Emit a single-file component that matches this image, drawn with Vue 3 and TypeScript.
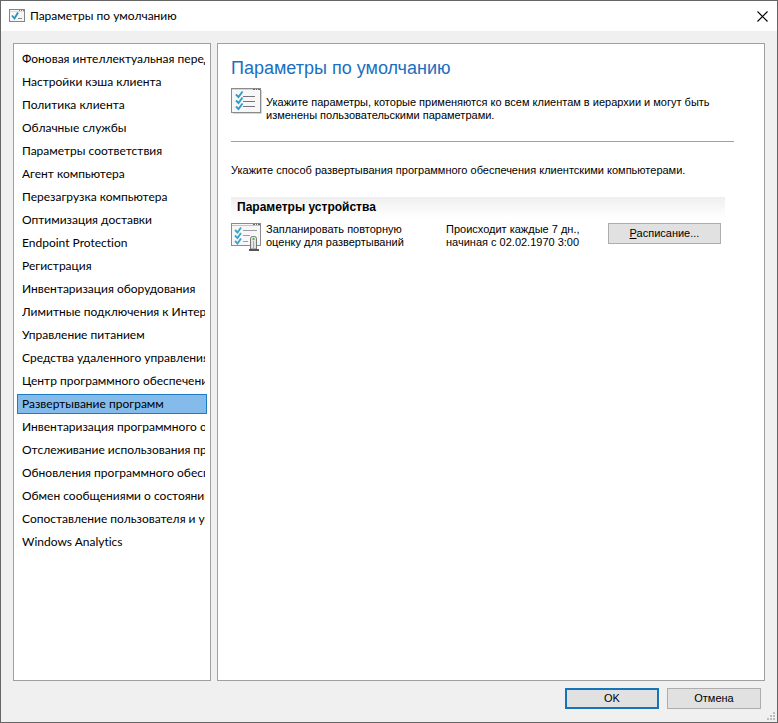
<script setup lang="ts">
import { ref } from 'vue'

const sections: string[] = [
  'Фоновая интеллектуальная передача',
  'Настройки кэша клиента',
  'Политика клиента',
  'Облачные службы',
  'Параметры соответствия',
  'Агент компьютера',
  'Перезагрузка компьютера',
  'Оптимизация доставки',
  'Endpoint Protection',
  'Регистрация',
  'Инвентаризация оборудования',
  'Лимитные подключения к Интернету',
  'Управление питанием',
  'Средства удаленного управления',
  'Центр программного обеспечения',
  'Развертывание программ',
  'Инвентаризация программного обеспечения',
  'Отслеживание использования программ',
  'Обновления программного обеспечения',
  'Обмен сообщениями о состоянии',
  'Сопоставление пользователя и устройства',
  'Windows Analytics',
]

const selected = ref<number>(15)
</script>

<template>
  <div class="window">
    <header class="titlebar">
      <svg class="title-icon" width="16" height="14" viewBox="0 0 16 14" aria-hidden="true">
        <rect x="0.5" y="0.5" width="15" height="12" fill="#f6f6f6" stroke="#858585" />
        <path d="M1 2.5H15" stroke="#dcdcdc" />
        <path d="M10 1.5h1M12 1.5h1M14 1.5h1" stroke="#777" />
        <path d="M3 6.5L5.500 9.500L9 3.500" fill="none" stroke="#2492bd" stroke-width="1.8" />
        <path d="M9 9.5h4" stroke="#888" />
      </svg>
      <span class="title">Параметры по умолчанию</span>
      <button class="close" type="button" aria-label="Закрыть">
        <svg width="11" height="11" viewBox="0 0 11 11" aria-hidden="true">
          <path d="M0.5 0.5L10.5 10.5M10.5 0.5L0.5 10.5" stroke="#000" stroke-width="1.2" />
        </svg>
      </button>
    </header>

    <div class="body">
      <nav class="sections">
        <button
          v-for="(name, i) in sections"
          :key="name"
          type="button"
          class="section"
          :class="{ active: i === selected }"
          @click="selected = i"
        >
          <span class="section-name">{{ name }}</span>
        </button>
      </nav>

      <main class="content">
        <h1>Параметры по умолчанию</h1>
        <div class="intro">
          <svg width="31" height="26" viewBox="0 0 31 26" aria-hidden="true">
            <path d="M2 25.5H30.500V2" fill="none" stroke="#d6d6d6" />
            <rect x="0.5" y="0.5" width="29" height="24" fill="#f7f7f8" stroke="#8b8b8b" />
            <path d="M1 1.500H29" stroke="#d5d5d5" />
            <path d="M22 1.500h2M25 1.500h1M27 1.500h2" stroke="#686868" />
            <path d="M12 8.500H24M12 13.500H24M12 18.500H24" stroke="#77737b" />
            <path d="M5 6.500L7.500 9L11.500 3.500M5 12.500L7.500 15L11.500 9.500M5 18.500L7.500 21L11.500 15.500" fill="none" stroke="#2b9cc4" stroke-width="1.8" />
          </svg>
          <p>Укажите параметры, которые применяются ко всем клиентам в иерархии и могут быть<br />изменены пользовательскими параметрами.</p>
        </div>
        <hr />
        <p class="hint">Укажите способ развертывания программного обеспечения клиентскими компьютерами.</p>
        <h2>Параметры устройства</h2>
        <div class="setting">
          <svg width="31" height="29" viewBox="0 0 31 29" aria-hidden="true">
            <rect x="0.5" y="0.5" width="29" height="22" fill="#f7f7f8" stroke="#8b8b8b" />
            <path d="M1 2.500H29" stroke="#c2c2c2" />
            <path d="M22 1.500h2M25 1.500h1M27 1.500h2" stroke="#686868" />
            <path d="M12 7.500H26M12 12.500H19M12 18.500H17" stroke="#a09ca3" />
            <path d="M4 7L6.500 9.500L10 4.500M4 12.500L6.500 15L10 10M4 18L6.500 20.500L10 15.500" fill="none" stroke="#3ba3c8" stroke-width="1.8" />
            <path d="M19.500 26V15.500Q19.500 13.500 21.500 13.500H23.500Q25.500 13.500 25.500 15.500V26Z" fill="#e3e3e3" stroke="#777" />
            <path d="M22.500 18V25" stroke="#aaa" />
            <path d="M22.500 15V17" stroke="#55b947" stroke-width="2" />
            <path d="M18 27H28" stroke="#555" stroke-width="2" />
          </svg>
          <p class="setting-name">Запланировать повторную<br />оценку для развертываний</p>
          <p class="setting-value">Происходит каждые 7 дн.,<br />начиная с 02.02.1970 3:00</p>
          <button class="button schedule" type="button"><u>Р</u>асписание...</button>
        </div>
      </main>
    </div>

    <footer class="actions">
      <button class="button primary" type="button">OK</button>
      <button class="button" type="button">Отмена</button>
      <svg class="grip" width="8" height="8" viewBox="0 0 8 8" aria-hidden="true">
        <path d="M6 0h2v2H6zM3 3h2v2H3zM6 3h2v2H6zM0 6h2v2H0zM3 6h2v2H3zM6 6h2v2H6z" fill="#bcbcbc" />
      </svg>
    </footer>
  </div>
</template>

<style>
body {
  background: #f0f0f0;
}
</style>

<style scoped>
* {
  box-sizing: border-box;
}

svg {
  flex: none;
}

.window {
  display: flex;
  flex-direction: column;
  position: relative;
  min-height: 100vh;
  border: 1px solid #666;
  background: #f0f0f0;
  color: #000;
  font-family: 'Liberation Sans', Arial, sans-serif;
  font-size: 11px;
  line-height: 13px;
}

.titlebar {
  display: flex;
  align-items: center;
  height: 30px;
  padding: 0 9px 0 8px;
  background: #fff;
}

.title {
  margin-left: 5px;
  font-family: Lato, 'Open Sans', sans-serif;
  font-size: 12px;
  line-height: 16px;
}

.close {
  display: flex;
  margin-left: auto;
  padding: 0;
  border: 0;
  background: none;
}

.body {
  display: flex;
  flex: 1;
  gap: 6px;
  padding: 12px 12px 0;
}

.sections {
  display: flex;
  flex: 0 0 198px;
  flex-direction: column;
  gap: 3px;
  min-width: 0;
  padding: 5px 3px;
  border: 1px solid #a0a0a0;
  background: #fff;
}

.section {
  height: 20px;
  padding: 0 1px 0 4px;
  border: 1px solid transparent;
  background: none;
  color: #000;
  font-family: Lato, 'Open Sans', sans-serif;
  font-size: 12px;
  font-variant-ligatures: none;
  line-height: 18px;
  text-align: left;
}

.section-name {
  display: block;
  overflow: hidden;
  white-space: nowrap;
}

.section.active {
  border-color: #1c7cc4;
  background: #84bbeb;
}

.content {
  flex: 1;
  min-width: 0;
  padding: 12px 30px 12px 13px;
  border: 1px solid #a0a0a0;
  background: #fff;
}

p {
  margin: 0;
}

h1 {
  margin: 0;
  color: #1a6fc0;
  font-size: 18px;
  font-weight: 400;
  line-height: 24px;
}

.intro {
  display: flex;
  gap: 4px;
  margin-top: 8px;
}

.intro p {
  padding-top: 8px;
}

hr {
  height: 1px;
  margin: 19px 0 22px;
  border: 0;
  background: #a0a0a0;
}

h2 {
  margin: 20px 9px 0 0;
  padding: 4px 6px;
  background: linear-gradient(#efefef, #fff);
  font-size: 12px;
  font-weight: 700;
  line-height: 13px;
}

.setting {
  display: flex;
  gap: 4px;
  margin: 5px 13px 0 0;
}

.setting-name {
  width: 176px;
}

.button {
  width: 94px;
  height: 21px;
  padding: 0;
  border: 1px solid #adadad;
  background: #e1e1e1;
  color: #000;
  font-family: inherit;
  font-size: 11px;
  line-height: 13px;
}

.schedule {
  width: 113px;
  margin-left: auto;
}

.primary {
  border: 2px solid #1874b8;
}

.actions {
  display: flex;
  justify-content: flex-end;
  gap: 8px;
  padding: 7px 16px 13px;
}

.grip {
  position: absolute;
  right: 2px;
  bottom: 2px;
}
</style>
